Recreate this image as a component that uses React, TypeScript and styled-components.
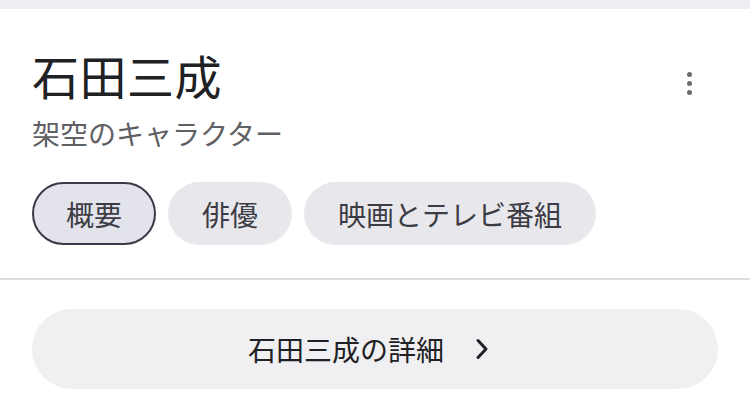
import React from "react";
import styled, { createGlobalStyle } from "styled-components";

const GlobalStyle = createGlobalStyle`
  html, body {
    margin: 0;
    padding: 0;
    background: #ffffff;
    font-family: "Noto Sans CJK JP", "Noto Sans", sans-serif;
  }
`;

const chips = [
  { label: "概要", active: true },
  { label: "俳優", active: false },
  { label: "映画とテレビ番組", active: false },
];

const Page = styled.div`
  width: 750px;
  height: 402px;
  overflow: hidden;
  background: #fff;
`;

const TopBand = styled.div`
  height: 9px;
  background: #eeeef2;
`;

const Card = styled.section`
  padding: 34px 32px 33px 32px;
  border-bottom: 2px solid #dcdcdf;
`;

const Header = styled.div`
  display: flex;
  justify-content: space-between;
  align-items: flex-start;
`;

const Title = styled.h1`
  margin: 0;
  font-size: 47px;
  font-weight: 400;
  line-height: 64px;
  color: #202124;
  letter-spacing: 0.5px;
`;

const Subtitle = styled.p`
  margin: 8px 0 0;
  font-size: 28px;
  line-height: 36px;
  color: #5f6064;
`;

const MoreButton = styled.button`
  border: none;
  background: none;
  padding: 0;
  margin: 29px 26px 0 0;
  display: flex;
  flex-direction: column;
  gap: 4px;
  cursor: pointer;
`;

const Dot = styled.span`
  width: 5px;
  height: 5px;
  border-radius: 50%;
  background: #6b6b70;
`;

const ChipRow = styled.div`
  display: flex;
  gap: 12px;
  margin-top: 31px;
`;

const Chip = styled.button<{ $active?: boolean }>`
  box-sizing: border-box;
  height: 63px;
  padding: 0 32px;
  border-radius: 32px;
  border: 2px solid ${(p) => (p.$active ? "#3b3a48" : "transparent")};
  background: ${(p) => (p.$active ? "#e3e3eb" : "#e8e8ec")};
  color: #3c3c44;
  font-family: inherit;
  font-size: 28px;
  line-height: 1;
  display: flex;
  align-items: center;
`;

const Footer = styled.div`
  padding: 29px 32px;
`;

const DetailButton = styled.button`
  width: 100%;
  height: 80px;
  border: none;
  border-radius: 40px;
  background: #f0f0f3;
  color: #202124;
  font-family: inherit;
  font-size: 28px;
  display: flex;
  align-items: center;
  justify-content: center;
  gap: 31px;
  padding: 0 13px 0 0;
`;

const Chevron = () => (
  <svg width="14" height="22" viewBox="0 0 14 22">
    <path
      d="M3 2.5 L11 11 L3 19.5"
      fill="none"
      stroke="#202124"
      strokeWidth="3"
      strokeLinecap="round"
      strokeLinejoin="round"
    />
  </svg>
);

const App = () => {
  return (
    <Page>
      <GlobalStyle />
      <TopBand />
      <Card>
        <Header>
          <div>
            <Title>石田三成</Title>
            <Subtitle>架空のキャラクター</Subtitle>
          </div>
          <MoreButton aria-label="その他">
            <Dot />
            <Dot />
            <Dot />
          </MoreButton>
        </Header>
        <ChipRow>
          {chips.map((chip) => (
            <Chip key={chip.label} $active={chip.active}>
              {chip.label}
            </Chip>
          ))}
        </ChipRow>
      </Card>
      <Footer>
        <DetailButton>
          <span>石田三成の詳細</span>
          <Chevron />
        </DetailButton>
      </Footer>
    </Page>
  );
};

export default App;
